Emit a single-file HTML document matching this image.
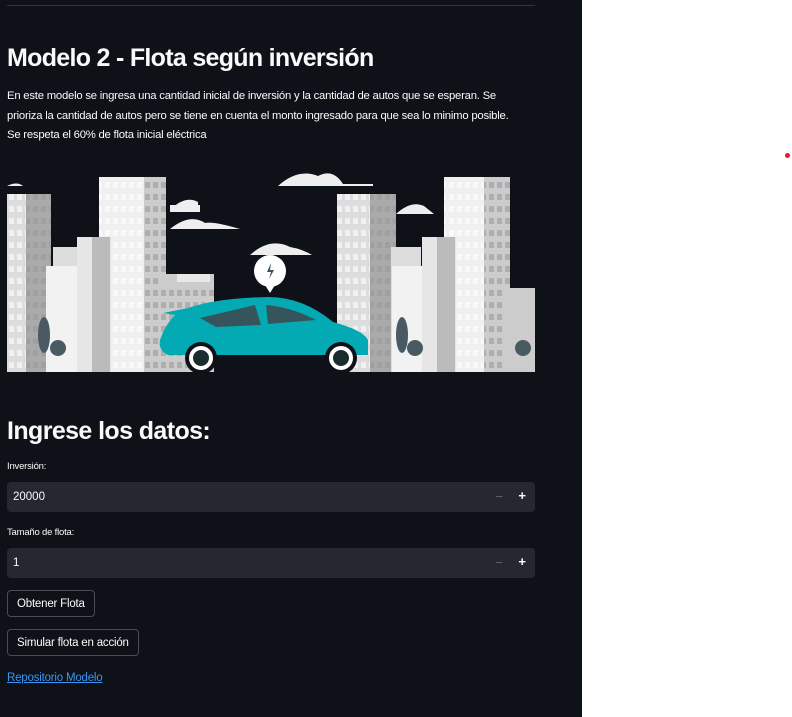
<!DOCTYPE html>
<html><head><meta charset="utf-8"><style>
*{margin:0;padding:0;box-sizing:border-box}
body{width:792px;height:717px;background:#fff;font-family:"Liberation Sans",sans-serif;position:relative;overflow:hidden}
.main{position:absolute;left:0;top:0;width:582px;height:717px;background:#0e1117;color:#fafafa}
.hr{position:absolute;left:7px;top:5px;width:528px;height:1px;background:#31333f}
h1{position:absolute;left:7px;top:44px;font-size:25px;font-weight:bold;letter-spacing:-0.7px;white-space:nowrap}
.p{position:absolute;left:7px;font-size:11.3px;letter-spacing:-0.22px;white-space:nowrap}
h2{position:absolute;left:7px;top:417px;font-size:25px;font-weight:bold;letter-spacing:-0.6px}
.lbl{position:absolute;left:7px;font-size:9.5px;letter-spacing:-0.2px}
.inp{position:absolute;left:7px;width:528px;height:30px;background:#262730;border-radius:4px;font-size:11.5px;padding:9px 6px}
.inp .m{position:absolute;right:32px;top:7px;color:#666;font-size:13px}
.inp .pl{position:absolute;right:9px;top:6px;color:#fff;font-size:13px;font-weight:bold}
.btn{position:absolute;left:7px;height:27px;border:1px solid #4a4c55;border-radius:4px;font-size:11.5px;padding:7px 9px;letter-spacing:-0.2px;background:#0e1117}
a{position:absolute;left:7px;top:672px;color:#3a95f0;font-size:11.5px;letter-spacing:-0.2px;text-decoration:underline}
.dot{position:absolute;left:785px;top:153px;width:5px;height:5px;border-radius:50%;background:#e02020}
</style></head><body>
<div class="main">
<div class="hr"></div>
<h1>Modelo 2 - Flota según inversión</h1>
<div class="p" style="top:90px">En este modelo se ingresa una cantidad inicial de inversión y la cantidad de autos que se esperan. Se</div>
<div class="p" style="top:110px">prioriza la cantidad de autos pero se tiene en cuenta el monto ingresado para que sea lo minimo posible.</div>
<div class="p" style="top:129px">Se respeta el 60% de flota inicial eléctrica</div>
<svg style="position:absolute;left:0;top:160px" width="540" height="220" viewBox="0 160 540 220">
<defs>
<pattern id="w" width="8" height="12" patternUnits="userSpaceOnUse"><rect x="1" y="2" width="5" height="6" fill="#fff" opacity="0.6"/></pattern>
<pattern id="d" width="8" height="12" patternUnits="userSpaceOnUse"><rect x="1" y="2" width="5" height="6" fill="#999" opacity="0.6"/></pattern>
</defs>
<g fill="#eee">
<path d="M278 186 q20-18 40-10 q15-8 25 8 h30 v2 h-95z"/>
<path d="M170 210 q15-15 28-8 v10z"/><path d="M170 205 h30 v7 h-30z"/>
<path d="M170 229 q20-16 35-6 q8-2 35 6z"/>
<path d="M250 255 q20-18 40-8 q12 2 22 8z"/>
<path d="M396 214 q15-14 28-8 l10 8z"/>
<path d="M7 186 q10-5 16 0z"/>
</g>
<rect x="7" y="194" width="20" height="178" fill="#ddd"/><rect x="7" y="194" width="20" height="178" fill="url(#w)"/>
<rect x="26" y="194" width="25" height="178" fill="#aaa"/><rect x="26" y="194" width="25" height="178" fill="url(#d)"/>
<rect x="99" y="177" width="45" height="195" fill="#f0f0f0"/><rect x="99" y="177" width="45" height="195" fill="url(#w)"/>
<rect x="144" y="177" width="22" height="195" fill="#ccc"/><rect x="144" y="177" width="22" height="195" fill="url(#d)"/>
<rect x="53" y="247" width="26" height="125" fill="#ddd"/><rect x="46" y="266" width="35" height="106" fill="#f2f2f2"/>
<rect x="77" y="237" width="34" height="135" fill="#e6e6e6"/><rect x="92" y="237" width="18" height="135" fill="#bbb"/>
<rect x="160" y="274" width="54" height="98" fill="#ccc"/><rect x="160" y="285" width="54" height="87" fill="url(#d)"/><rect x="177" y="274" width="33" height="8" fill="#e8e8e8"/>
<rect x="337" y="194" width="42" height="178" fill="#ddd"/><rect x="337" y="194" width="42" height="178" fill="url(#w)"/>
<rect x="370" y="194" width="26" height="178" fill="#aaa"/><rect x="370" y="194" width="26" height="178" fill="url(#d)"/>
<rect x="444" y="177" width="40" height="195" fill="#f0f0f0"/><rect x="444" y="177" width="40" height="195" fill="url(#w)"/>
<rect x="484" y="177" width="26" height="195" fill="#ccc"/><rect x="484" y="177" width="26" height="195" fill="url(#d)"/>
<rect x="391" y="247" width="30" height="125" fill="#ddd"/><rect x="392" y="266" width="30" height="106" fill="#f2f2f2"/>
<rect x="422" y="237" width="34" height="135" fill="#e6e6e6"/><rect x="437" y="237" width="18" height="135" fill="#bbb"/>
<rect x="503" y="288" width="32" height="84" fill="#ccc"/>
<g fill="#4a5a63"><ellipse cx="44" cy="335" rx="6" ry="18"/><circle cx="58" cy="348" r="8"/><ellipse cx="402" cy="335" rx="6" ry="18"/><circle cx="415" cy="348" r="8"/><circle cx="523" cy="348" r="8"/></g>
<path d="M160 340 q5-15 15-25 l-12-2 l25-5 q30-10 80-11 q35 0 65 25 q30 8 35 18 v15 h-200 q-10-5-8-15z" fill="#03aab3"/>
<path d="M200 318 l55-13 l6 20 l-45 2z M266 305 q25 2 50 15 l-48 4z" fill="#35545c"/>
<circle cx="201" cy="358" r="16" fill="#0e1117"/><circle cx="201" cy="358" r="12" fill="#fff"/><circle cx="201" cy="358" r="8" fill="#1c2b30"/>
<circle cx="341" cy="358" r="16" fill="#0e1117"/><circle cx="341" cy="358" r="12" fill="#fff"/><circle cx="341" cy="358" r="8" fill="#1c2b30"/>
<circle cx="270" cy="271" r="16" fill="#fff"/><path d="M265 285 l5 8 l5-8z" fill="#fff"/>
<path d="M271 263 l-4 9 h4 l-2 7 l5-9 h-4z" fill="#35545c"/>
</svg>
<h2>Ingrese los datos:</h2>
<div class="lbl" style="top:461px">Inversión:</div>
<div class="inp" style="top:482px">20000<span class="m">−</span><span class="pl">+</span></div>
<div class="lbl" style="top:527px">Tamaño de flota:</div>
<div class="inp" style="top:548px">1<span class="m">−</span><span class="pl">+</span></div>
<div class="btn" style="top:590px">Obtener Flota</div>
<div class="btn" style="top:629px">Simular flota en acción</div>
<a>Repositorio Modelo</a>
</div>
<div class="dot"></div>
</body></html>
